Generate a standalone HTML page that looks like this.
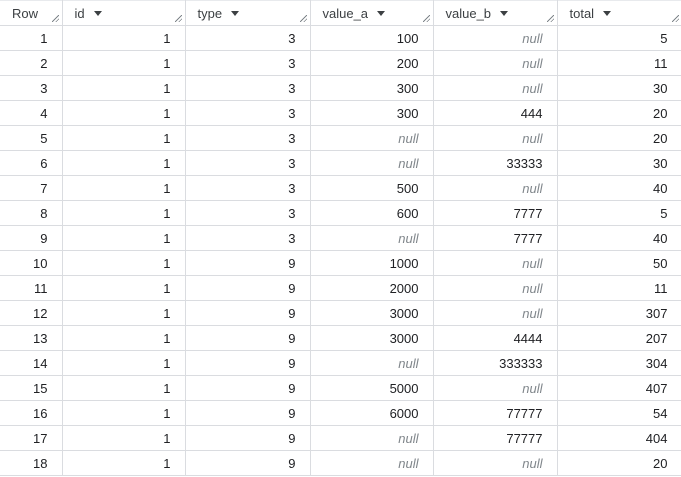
<!DOCTYPE html>
<html><head><style>
body{margin:0;width:681px;height:477px;overflow:hidden;background:#fff;font-family:"Liberation Sans",Arial,sans-serif;font-size:13px;color:#202124}
table{border-collapse:collapse;table-layout:fixed;width:682px;position:absolute;left:0;top:0}
td,th{border-right:1px solid #dadce0;border-bottom:1px solid #dadce0;height:24px;padding:0 14px 0 12px;white-space:nowrap;position:relative}
th{text-align:left;font-weight:normal;color:#3c4043;background:#fff;border-top:1px solid #e8eaed}
td{text-align:right}
td.n{color:#80868b;font-style:italic}
.c{display:inline-block;width:0;height:0;border-left:4px solid transparent;border-right:4px solid transparent;border-top:5px solid #3c4043;margin-left:9px;vertical-align:2px}
.h{position:absolute;right:3px;bottom:3px;width:7px;height:7px;background:linear-gradient(135deg,transparent 45%,#80868b 45%,#80868b 55%,transparent 55%,transparent 72%,#80868b 72%,#80868b 82%,transparent 82%)}
</style></head><body>
<table>
<colgroup><col style="width:62px"><col style="width:123px"><col style="width:125px"><col style="width:123px"><col style="width:124px"><col style="width:125px"></colgroup>
<tr><th>Row<span class="h"></span></th><th>id<span class="c"></span><span class="h"></span></th><th>type<span class="c"></span><span class="h"></span></th><th>value_a<span class="c"></span><span class="h"></span></th><th>value_b<span class="c"></span><span class="h"></span></th><th>total<span class="c"></span><span class="h"></span></th></tr>
<tr><td>1</td><td>1</td><td>3</td><td>100</td><td class="n">null</td><td>5</td></tr>
<tr><td>2</td><td>1</td><td>3</td><td>200</td><td class="n">null</td><td>11</td></tr>
<tr><td>3</td><td>1</td><td>3</td><td>300</td><td class="n">null</td><td>30</td></tr>
<tr><td>4</td><td>1</td><td>3</td><td>300</td><td>444</td><td>20</td></tr>
<tr><td>5</td><td>1</td><td>3</td><td class="n">null</td><td class="n">null</td><td>20</td></tr>
<tr><td>6</td><td>1</td><td>3</td><td class="n">null</td><td>33333</td><td>30</td></tr>
<tr><td>7</td><td>1</td><td>3</td><td>500</td><td class="n">null</td><td>40</td></tr>
<tr><td>8</td><td>1</td><td>3</td><td>600</td><td>7777</td><td>5</td></tr>
<tr><td>9</td><td>1</td><td>3</td><td class="n">null</td><td>7777</td><td>40</td></tr>
<tr><td>10</td><td>1</td><td>9</td><td>1000</td><td class="n">null</td><td>50</td></tr>
<tr><td>11</td><td>1</td><td>9</td><td>2000</td><td class="n">null</td><td>11</td></tr>
<tr><td>12</td><td>1</td><td>9</td><td>3000</td><td class="n">null</td><td>307</td></tr>
<tr><td>13</td><td>1</td><td>9</td><td>3000</td><td>4444</td><td>207</td></tr>
<tr><td>14</td><td>1</td><td>9</td><td class="n">null</td><td>333333</td><td>304</td></tr>
<tr><td>15</td><td>1</td><td>9</td><td>5000</td><td class="n">null</td><td>407</td></tr>
<tr><td>16</td><td>1</td><td>9</td><td>6000</td><td>77777</td><td>54</td></tr>
<tr><td>17</td><td>1</td><td>9</td><td class="n">null</td><td>77777</td><td>404</td></tr>
<tr><td>18</td><td>1</td><td>9</td><td class="n">null</td><td class="n">null</td><td>20</td></tr>
</table>
</body></html>
